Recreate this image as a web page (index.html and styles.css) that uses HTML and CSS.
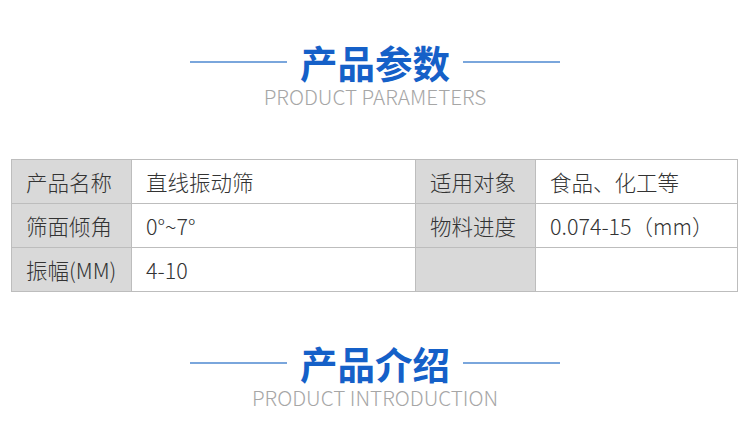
FILE: index.html
```html
<!DOCTYPE html>
<html lang="zh-CN">
<head>
<meta charset="utf-8">
<title>产品参数</title>
<link rel="stylesheet" href="styles.css">
</head>
<body>
<section class="heading heading-params">
  <div class="heading-row">
    <span class="rule"></span>
    <h2 class="heading-cn">产品参数</h2>
    <span class="rule"></span>
  </div>
  <p class="heading-en">PRODUCT PARAMETERS</p>
</section>

<table class="params">
  <colgroup>
    <col class="col-label">
    <col class="col-value-wide">
    <col class="col-label">
    <col class="col-value">
  </colgroup>
  <tr>
    <td class="label">产品名称</td>
    <td class="value">直线振动筛</td>
    <td class="label">适用对象</td>
    <td class="value">食品、化工等</td>
  </tr>
  <tr>
    <td class="label">筛面倾角</td>
    <td class="value">0°~7°</td>
    <td class="label">物料进度</td>
    <td class="value">0.074-15（mm）</td>
  </tr>
  <tr>
    <td class="label">振幅(MM)</td>
    <td class="value">4-10</td>
    <td class="label"></td>
    <td class="value"></td>
  </tr>
</table>

<section class="heading heading-intro">
  <div class="heading-row">
    <span class="rule"></span>
    <h2 class="heading-cn">产品介绍</h2>
    <span class="rule"></span>
  </div>
  <p class="heading-en">PRODUCT INTRODUCTION</p>
</section>
</body>
</html>
```

FILE: styles.css
```css
html, body {
  margin: 0;
  padding: 0;
  background: #ffffff;
}

body {
  width: 750px;
  height: 437px;
  overflow: hidden;
  font-family: "Noto Sans CJK SC", "Noto Sans", sans-serif;
  color: #333333;
}

.heading {
  display: flex;
  flex-direction: column;
  align-items: center;
}

.heading-params {
  padding-top: 42px;
}

.heading-intro {
  padding-top: 51px;
}

.heading-row {
  display: flex;
  align-items: center;
  gap: 13px;
  height: 40px;
}

.rule {
  display: block;
  width: 97px;
  height: 2px;
  background: #7aa6dc;
}

.heading-cn {
  margin: 0;
  font-size: 37.5px;
  line-height: 40px;
  font-weight: 700;
  color: #1560c8;
}

.heading-en {
  margin: 2px 0 0;
  font-size: 20.7px;
  line-height: 24px;
  font-weight: 300;
  color: #a6a6a6;
}

.params {
  margin: 51px 0 0 11px;
  width: 726px;
  border-collapse: collapse;
  table-layout: fixed;
  font-size: 21.5px;
}

.col-label {
  width: 120px;
}

.col-value-wide {
  width: 284px;
}

.col-value {
  width: 202px;
}

.params td {
  box-sizing: border-box;
  height: 44px;
  padding: 0 0 0 14px;
  border: 1px solid #bdbdbd;
  line-height: 24px;
  vertical-align: middle;
  white-space: nowrap;
  font-weight: 300;
}

.params td.label {
  background: #d9d9d9;
  color: #333333;
}

.params td.value {
  color: #333333;
}
```
